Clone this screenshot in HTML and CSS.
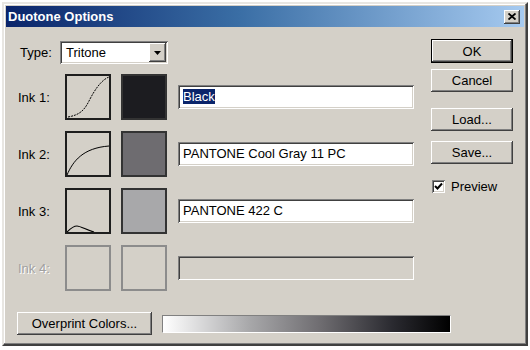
FILE: index.html
```html
<!DOCTYPE html>
<html lang="en">
<head>
    <meta charset="UTF-8">
    <title>Duotone Options</title>
    <link rel="stylesheet" href="styles.css">
</head>
<body>

<div class="dialog">
    <div class="titlebar">
        <span class="title">Duotone Options</span>
        <button class="close-btn">
            <svg width="8" height="7" viewBox="0 0 8 7"><path d="M0.5 0.5 L7.5 6.5 M7.5 0.5 L0.5 6.5" stroke="#000" stroke-width="1.8"/></svg>
        </button>
    </div>

    <div class="dialog-body">
        <div class="left-col">
            <div class="type-row">
                <label>Type:</label>
                <div class="select">
                    <span class="select-value">Tritone</span>
                    <span class="select-arrow"><svg width="7" height="4" viewBox="0 0 7 4"><path d="M0 0 H7 L3.5 4 Z" fill="#000"/></svg></span>
                </div>
            </div>

            <div class="ink-row">
                <label>Ink 1:</label>
                <div class="curve-box">
                    <svg width="42" height="42" viewBox="0 0 42 42"><path d="M1 41 C 12 39, 17 35, 22 25 S 34 4, 42 1" fill="none" stroke="#000" stroke-width="1" stroke-dasharray="2 1"/></svg>
                </div>
                <div class="swatch ink1"></div>
                <div class="text-field"><span class="selected">Black</span></div>
            </div>

            <div class="ink-row">
                <label>Ink 2:</label>
                <div class="curve-box">
                    <svg width="42" height="42" viewBox="0 0 42 42"><path d="M0 42 C 6 28, 16 15, 42 13" fill="none" stroke="#000" stroke-width="1"/></svg>
                </div>
                <div class="swatch ink2"></div>
                <div class="text-field">PANTONE Cool Gray 11 PC</div>
            </div>

            <div class="ink-row">
                <label>Ink 3:</label>
                <div class="curve-box">
                    <svg width="42" height="42" viewBox="0 0 42 42"><path d="M0 42 C 4 38, 7 36, 10 36 S 20 40, 27 42" fill="none" stroke="#000" stroke-width="1.2"/></svg>
                </div>
                <div class="swatch ink3"></div>
                <div class="text-field">PANTONE 422 C</div>
            </div>

            <div class="ink-row disabled">
                <label>Ink 4:</label>
                <div class="curve-box"></div>
                <div class="swatch"></div>
                <div class="text-field"></div>
            </div>

            <div class="overprint-row">
                <button class="btn overprint-btn">Overprint Colors...</button>
                <div class="ramp"></div>
            </div>
        </div>

        <div class="right-col">
            <button class="btn default">OK</button>
            <button class="btn cancel">Cancel</button>
            <button class="btn load">Load...</button>
            <button class="btn save">Save...</button>
            <div class="check-row">
                <span class="checkbox">
                    <svg width="9" height="9" viewBox="0 0 9 9"><path d="M1 4 L3.5 6.5 L8 1.5" fill="none" stroke="#000" stroke-width="2"/></svg>
                </span>
                <span>Preview</span>
            </div>
        </div>
    </div>
</div>

</body>
</html>
```

FILE: styles.css
```css
body {
    margin: 0;
    padding: 2px;
    background-color: #ffffff;
    font-family: "Liberation Sans", Arial, sans-serif;
    font-size: 13px;
    color: #000;
}
.dialog {
    width: 522px;
    height: 340px;
    background-color: #d4d0c8;
    border: 2px solid;
    border-color: #e8e6e2 #404040 #404040 #e8e6e2;
    box-shadow: inset -1px -1px #808080, inset 1px 1px #ffffff;
}
.titlebar {
    height: 21px;
    margin: 2px 2px 0 2px;
    background: linear-gradient(to right, #0a246a, #3a6ea5 45%, #a6caf0);
    display: flex;
    align-items: center;
    justify-content: space-between;
    padding: 0 4px 0 2px;
}
.title {
    color: #fff;
    font-weight: bold;
    font-size: 13px;
}
.close-btn {
    width: 16px;
    height: 14px;
    padding: 0;
    border: none;
    background-color: #d4d0c8;
    box-shadow: inset -1px -1px #404040, inset 1px 1px #ffffff, inset -2px -2px #808080;
    display: flex;
    align-items: center;
    justify-content: center;
}
.dialog-body {
    display: flex;
    padding: 0 0 0 13px;
}
.left-col {
    width: 397px;
    flex-shrink: 0;
    display: flex;
    flex-direction: column;
}
.type-row {
    display: flex;
    align-items: center;
    margin-top: 14px;
    height: 23px;
}
.type-row label {
    width: 40px;
    padding-left: 3px;
}
.select {
    width: 108px;
    height: 23px;
    box-sizing: border-box;
    background: #fff;
    box-shadow: inset 1px 1px #808080, inset -1px -1px #ffffff, inset 2px 2px #404040, inset -2px -2px #d4d0c8;
    display: flex;
    align-items: center;
    justify-content: space-between;
    padding: 2px;
}
.select-value {
    padding-left: 4px;
}
.select-arrow {
    width: 17px;
    height: 19px;
    background-color: #d4d0c8;
    box-shadow: inset -1px -1px #404040, inset 1px 1px #ffffff, inset -2px -2px #808080;
    display: flex;
    align-items: center;
    justify-content: center;
}
.ink-row {
    display: flex;
    align-items: center;
    margin-top: 11px;
    height: 46px;
}
.type-row + .ink-row {
    margin-top: 10px;
}
.ink-row label {
    width: 47px;
    padding-left: 1px;
}
.curve-box, .swatch {
    width: 46px;
    height: 46px;
    flex-shrink: 0;
    box-sizing: border-box;
    border: 2px solid #1e1e1e;
}
.curve-box svg {
    display: block;
}
.swatch {
    margin-left: 10px;
    border-color: #333;
}
.ink1 { background-color: #1c1c20; }
.ink2 { background-color: #6e6c70; }
.ink3 { background-color: #a8a8aa; }
.text-field {
    margin-left: 11px;
    width: 236px;
    height: 24px;
    flex-shrink: 0;
    box-sizing: border-box;
    background: #fff;
    box-shadow: inset 1px 1px #808080, inset -1px -1px #ffffff, inset 2px 2px #404040, inset -2px -2px #d4d0c8;
    padding: 4px 0 0 5px;
    white-space: nowrap;
}
.selected {
    background-color: #0a246a;
    color: #fff;
}
.disabled label {
    color: #a0a0a0;
    text-shadow: 1px 1px #ffffff;
}
.disabled .curve-box, .disabled .swatch {
    border-color: #8c8c8c;
}
.disabled .text-field {
    background-color: #d4d0c8;
}
.overprint-row {
    display: flex;
    align-items: center;
    margin-top: 21px;
}
.btn {
    font-family: "Liberation Sans", Arial, sans-serif;
    font-size: 13px;
    color: #000;
    height: 23px;
    padding: 0;
    border: none;
    background-color: #d4d0c8;
    box-shadow: inset -1px -1px #404040, inset 1px 1px #ffffff, inset -2px -2px #808080;
}
.overprint-btn {
    width: 135px;
    flex-shrink: 0;
}
.ramp {
    margin-left: 10px;
    width: 289px;
    height: 18px;
    flex-shrink: 0;
    box-sizing: border-box;
    border: 1px solid;
    border-color: #808080 #ffffff #ffffff #808080;
    background: linear-gradient(to right, #ffffff, #a8a8aa 30%, #6e6c70 55%, #2a2a30 80%, #000000);
}
.right-col {
    margin-left: 17px;
    width: 82px;
    display: flex;
    flex-direction: column;
    padding-top: 12px;
}
.btn.default {
    border: 1px solid #000;
    height: 24px;
}
.cancel { margin-top: 6px; }
.load { margin-top: 16px; }
.save { margin-top: 10px; }
.check-row {
    display: flex;
    align-items: center;
    margin-top: 15px;
    gap: 6px;
    padding-left: 1px;
}
.checkbox {
    width: 13px;
    height: 13px;
    box-sizing: border-box;
    background: #fff;
    box-shadow: inset 1px 1px #808080, inset -1px -1px #ffffff, inset 2px 2px #404040, inset -2px -2px #d4d0c8;
    display: flex;
    align-items: center;
    justify-content: center;
}
```
